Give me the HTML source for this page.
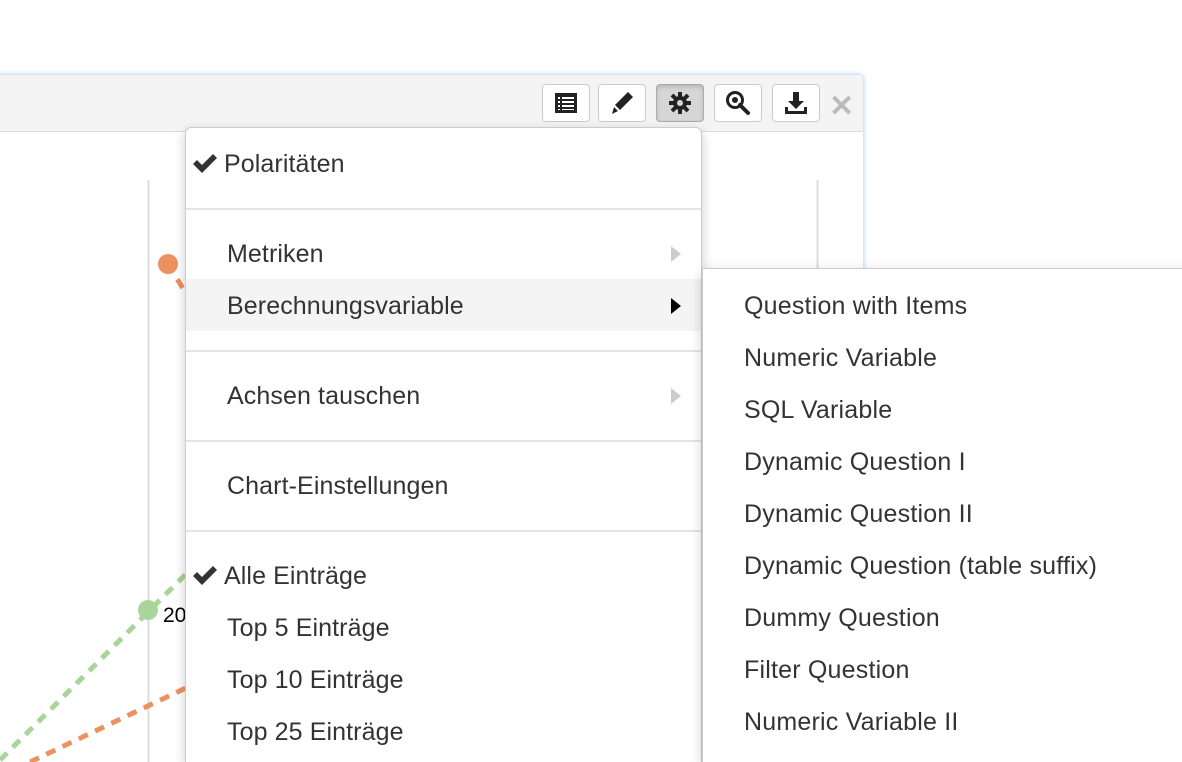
<!DOCTYPE html>
<html style="height:762px;overflow:hidden"><head><meta charset="utf-8"><style>
body{margin:0;width:1182px;height:762px;overflow:hidden;background:#fff;font-family:"Liberation Sans",Arial,sans-serif;position:relative}
.panel{position:absolute;left:-10px;top:74px;width:874px;height:688px;border:1px solid #d8e6f2;border-bottom:none;border-radius:6px 6px 0 0;box-shadow:0 0 4px rgba(120,170,220,.5);background:#fff;box-sizing:border-box}
.hdr{position:absolute;left:0;top:0;right:0;height:56px;background:#f4f4f4;border-bottom:1px solid #ddd;border-radius:6px 6px 0 0}
.btn{position:absolute;top:9px;width:48px;height:38px;border:1px solid #ccc;border-radius:4px;background:#fff;box-sizing:border-box;display:flex;align-items:center;justify-content:center}
.btn.act{background:#d6d6d6;border-color:#aaa;box-shadow:inset 0 2px 4px rgba(0,0,0,.15)}
.menu{position:absolute;left:185px;top:127px;width:517px;height:635px;background:#fff;border:1px solid #ccc;border-bottom:none;border-radius:6px 6px 0 0;box-shadow:0 4px 12px rgba(0,0,0,.2);box-sizing:border-box}
.it{position:absolute;left:0;right:0;height:52px;line-height:54px;font-size:25px;letter-spacing:0.1px;color:#333;padding-left:41px}
.sep{position:absolute;left:0;right:0;height:2px;background:#e5e5e5}
.chk{position:absolute;left:6px;top:15px}
.ar{position:absolute;right:20px;top:19px;width:0;height:0;border-top:8px solid transparent;border-bottom:8px solid transparent;border-left:10px solid #ccc}
.sub{position:absolute;left:702px;top:268px;width:490px;height:494px;background:#fff;border:1px solid #ccc;border-bottom:none;box-shadow:0 4px 12px rgba(0,0,0,.2);box-sizing:border-box}
.si{position:absolute;left:41px;font-size:25px;letter-spacing:0.2px;color:#333;height:52px;line-height:54px}
</style></head><body>
<div class="panel"><div class="hdr">
<div class="btn" style="left:551px"><svg width="24" height="22" viewBox="0 0 24 22"><rect x="1" y="1" width="22" height="20" fill="#222"/><g fill="#fff"><rect x="4" y="5" width="2" height="2"/><rect x="8" y="5" width="12" height="2"/><rect x="4" y="9" width="2" height="2"/><rect x="8" y="9" width="12" height="2"/><rect x="4" y="13" width="2" height="2"/><rect x="8" y="13" width="12" height="2"/><rect x="4" y="17" width="2" height="1"/><rect x="8" y="17" width="12" height="1"/></g></svg></div>
<div class="btn" style="left:607px"><svg width="26" height="26" viewBox="0 0 26 26"><path d="M19 2l5 5-13 13-5-5z" fill="#222"/><path d="M5 17l4 4-6 3z" fill="#222"/></svg></div>
<div class="btn act" style="left:665px"><svg width="24" height="24" viewBox="0 0 24 24"><g fill="#222"><circle cx="12" cy="12" r="7"/><g stroke="#222" stroke-width="4"><line x1="12" y1="1" x2="12" y2="23"/><line x1="1" y1="12" x2="23" y2="12"/><line x1="4" y1="4" x2="20" y2="20"/><line x1="20" y1="4" x2="4" y2="20"/></g></g><circle cx="12" cy="12" r="3" fill="#d6d6d6"/></svg></div>
<div class="btn" style="left:723px"><svg width="26" height="26" viewBox="0 0 26 26"><circle cx="10" cy="10" r="7.5" fill="none" stroke="#222" stroke-width="3"/><circle cx="10" cy="10" r="3" fill="#222"/><path d="M15 15l8 8" stroke="#222" stroke-width="4" stroke-linecap="round"/></svg></div>
<div class="btn" style="left:781px"><svg width="26" height="26" viewBox="0 0 26 26"><path d="M10 2h6v9h5l-8 8-8-8h5z" fill="#222"/><path d="M2 17v7h22v-7h-3v4H5v-4z" fill="#222"/></svg></div>
<div style="position:absolute;left:838px;top:14px;font-size:30px;color:#bbb;font-weight:bold">✕</div>
</div></div>
<svg style="position:absolute;left:0;top:0" width="1182" height="762">
<line x1="148.5" y1="180" x2="148.5" y2="762" stroke="#ddd" stroke-width="2"/>
<line x1="817.5" y1="180" x2="817.5" y2="762" stroke="#ddd" stroke-width="2"/>
<line x1="0" y1="760" x2="190" y2="570" stroke="#a9d49a" stroke-width="5" stroke-dasharray="10,8"/>
<line x1="30" y1="762" x2="190" y2="686" stroke="#ec9260" stroke-width="5" stroke-dasharray="10,8"/>
<line x1="168" y1="264" x2="190" y2="300" stroke="#ec9260" stroke-width="5" stroke-dasharray="10,8"/>
<circle cx="168" cy="264" r="10" fill="#ec9260"/>
<circle cx="148" cy="610" r="10" fill="#a9d49a"/>
<text x="163" y="622" font-size="21" fill="#000" font-family="Liberation Sans">20</text>
</svg>
<div class="menu">
<div class="it" style="top:9px;padding-left:38px"><svg class="chk" width="26" height="22" viewBox="0 0 26 22"><path d="M1 12l4-4 5 5L21 2l4 4L10 21z" fill="#333"/></svg>Polaritäten</div>
<div class="sep" style="top:80px"></div>
<div class="it" style="top:99px">Metriken<span class="ar"></span></div>
<div class="it" style="top:151px;background:#f4f4f4">Berechnungsvariable<span class="ar" style="border-left-color:#000"></span></div>
<div class="sep" style="top:222px"></div>
<div class="it" style="top:241px">Achsen tauschen<span class="ar"></span></div>
<div class="sep" style="top:312px"></div>
<div class="it" style="top:331px">Chart-Einstellungen</div>
<div class="sep" style="top:402px"></div>
<div class="it" style="top:421px;padding-left:38px"><svg class="chk" width="26" height="22" viewBox="0 0 26 22"><path d="M1 12l4-4 5 5L21 2l4 4L10 21z" fill="#333"/></svg>Alle Einträge</div>
<div class="it" style="top:473px">Top 5 Einträge</div>
<div class="it" style="top:525px">Top 10 Einträge</div>
<div class="it" style="top:577px">Top 25 Einträge</div>
</div>
<div class="sub">
<div class="si" style="top:10px">Question with Items</div>
<div class="si" style="top:62px">Numeric Variable</div>
<div class="si" style="top:114px">SQL Variable</div>
<div class="si" style="top:166px">Dynamic Question I</div>
<div class="si" style="top:218px">Dynamic Question II</div>
<div class="si" style="top:270px">Dynamic Question (table suffix)</div>
<div class="si" style="top:322px">Dummy Question</div>
<div class="si" style="top:374px">Filter Question</div>
<div class="si" style="top:426px">Numeric Variable II</div>
</div>
</body></html>
